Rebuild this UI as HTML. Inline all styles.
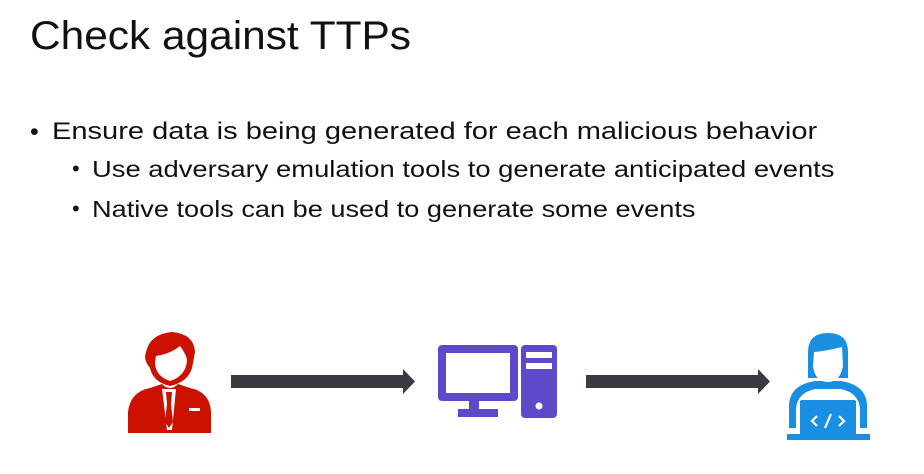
<!DOCTYPE html>
<html><head><style>
body{margin:0;width:924px;height:474px;background:#fff;overflow:hidden;position:relative;font-family:"Liberation Sans",sans-serif;color:#111}
.t{position:absolute;white-space:nowrap;transform-origin:0 0}
</style></head><body>
<div class="t" style="left:30px;top:14px;font-size:40px;transform:scaleX(1.06)">Check against TTPs</div>
<div class="t" style="left:30px;top:118px;font-size:25px;">•</div>
<div class="t" style="left:52px;top:118px;font-size:24px;transform:scaleX(1.21)">Ensure data is being generated for each malicious behavior</div>
<div class="t" style="left:72px;top:156px;font-size:22px;">•</div>
<div class="t" style="left:92px;top:156px;font-size:23px;transform:scaleX(1.19)">Use adversary emulation tools to generate anticipated events</div>
<div class="t" style="left:72px;top:196px;font-size:22px;">•</div>
<div class="t" style="left:92px;top:196px;font-size:23px;transform:scaleX(1.18)">Native tools can be used to generate some events</div>

<svg width="924" height="474" style="position:absolute;left:0;top:0">
<g fill="#cc1100">
<path d="M146 352 Q150 334 172 332 Q194 334 195 352 L192 368 Q188 382 170 386 Q153 382 150 368 Q143 360 146 352Z"/>
<path d="M128 412 Q130 392 150 388 L162 384 Q170 392 178 384 L190 388 Q210 392 211 412 L211 433 L128 433Z"/>
</g>
<path d="M156 356 Q170 354 180 346 Q186 354 187 360 Q186 376 170 381 Q155 376 155 362Z" fill="#fff"/>
<path d="M162 389 L176 389 L172 430 L167 430Z" fill="#fff"/>
<path d="M166 392 L172 392 L171 404 L173 422 L169 428 L165 422 L167 404Z" fill="#cc1100"/>
<rect x="189" y="408" width="11" height="3" fill="#fff"/>
<path d="M231 375 L403 375 L403 369 L415 381.5 L403 394 L403 388 L231 388Z" fill="#3c3a40"/>
<path d="M586 375 L758 375 L758 369 L770 381.5 L758 394 L758 388 L586 388Z" fill="#3c3a40"/>
<g fill="#6049c8">
<rect x="438" y="345" width="80" height="56" rx="4"/>
<rect x="469" y="400" width="10" height="12"/>
<rect x="458" y="409" width="40" height="8"/>
<rect x="521" y="345" width="36" height="73" rx="4"/>
</g>
<rect x="446" y="353" width="64" height="40" fill="#fff"/>
<rect x="526" y="352" width="26" height="6" fill="#fff"/>
<rect x="526" y="363" width="26" height="6" fill="#fff"/>
<circle cx="539" cy="406" r="3.5" fill="#fff"/>
<g fill="#1a8ee0">
<path d="M808 352 Q808 333 828 333 Q848 333 848 352 L848 378 L808 378Z"/>
<path d="M789 405 Q790 385 815 381 L841 381 Q866 385 867 405 L867 428 L789 428Z"/>
<rect x="787" y="434" width="83" height="6"/>
</g>
<path d="M814 352 Q826 351 842 347 L843 366 Q840 382 828 382 Q815 382 813 366Z" fill="#fff"/>
<path d="M796 409 Q797 393 815 389 L841 389 Q859 393 860 409 L860 432 L796 432Z" fill="#fff"/>
<rect x="800" y="400" width="56" height="40" rx="2" fill="#1a8ee0"/>
<g stroke="#fff" stroke-width="2.2" fill="none">
<path d="M817 416 L812 421 L817 426"/><path d="M839 416 L844 421 L839 426"/><path d="M831 414 L825 428"/>
</g>
</svg>
</body></html>
